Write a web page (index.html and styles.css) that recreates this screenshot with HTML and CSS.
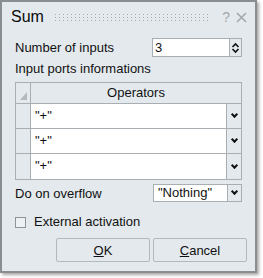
FILE: index.html
```html
<!DOCTYPE html>
<html lang="en">
<head>
  <meta charset="UTF-8" />
  <title>Sum</title>
  <link rel="stylesheet" href="styles.css">
</head>
<body>

  <div class="dialog">
    <div class="titlebar">
      <span class="title">Sum</span>
      <span class="grip"></span>
      <span class="help">?</span>
      <svg class="close" width="11" height="11" viewBox="0 0 11 11">
        <path d="M1 1 L10 10 M10 1 L1 10" stroke="#a3a8ab" stroke-width="1.6" />
      </svg>
    </div>

    <div class="content">
      <div class="field">
        <span>Number of inputs</span>
        <div class="spin">
          <span class="spin-value">3</span>
          <span class="spin-btn">
            <svg width="9" height="12" viewBox="0 0 9 12">
              <path d="M1.5 5 L4.5 2 L7.5 5 M1.5 7 L4.5 10 L7.5 7" fill="none" stroke="#111" stroke-width="1.6" />
            </svg>
          </span>
        </div>
      </div>

      <div class="section-label">Input ports informations</div>

      <div class="grid">
        <div class="corner"><span class="tri"></span></div>
        <div class="col-head">Operators</div>

        <div class="row-head"></div>
        <div class="cell"><span class="cell-text">"+"</span><span class="drop"><i class="chev"></i></span></div>

        <div class="row-head"></div>
        <div class="cell"><span class="cell-text">"+"</span><span class="drop"><i class="chev"></i></span></div>

        <div class="row-head"></div>
        <div class="cell"><span class="cell-text">"+"</span><span class="drop"><i class="chev"></i></span></div>
      </div>

      <div class="field overflow">
        <span>Do on overflow</span>
        <div class="combo">
          <span class="combo-value">"Nothing"</span>
          <span class="drop"><i class="chev"></i></span>
        </div>
      </div>

      <label class="check">
        <span class="box"></span>
        External activation
      </label>
    </div>

    <div class="buttons">
      <button><u>O</u>K</button>
      <button><u>C</u>ancel</button>
    </div>
  </div>

</body>
</html>
```

FILE: styles.css
```css
:root {
  --bg: #e3e9ed;
  --line: #a9aeb2;
  --text: #111;
}

* {
  margin: 0;
  padding: 0;
  box-sizing: border-box;
  font-family: 'Liberation Sans', Arial, sans-serif;
}

body {
  background: #fff;
  width: 263px;
  height: 278px;
  overflow: hidden;
}

.dialog {
  width: 257px;
  height: 273px;
  background: var(--bg);
  border: 2px solid #8b8e90;
  box-shadow: 2px 2px 3px rgba(0, 0, 0, 0.35);
  color: var(--text);
  font-size: 13px;
  display: flex;
  flex-direction: column;
}

.titlebar {
  height: 32px;
  display: flex;
  align-items: center;
  padding: 0 8px 2px 9px;
}

.title {
  font-size: 16px;
  color: #0b0b0b;
}

/* dotted drag handle: vertical lines masked into dots */
.grip {
  flex: 1;
  height: 7px;
  margin: 0 13px 0 11px;
  background-image: linear-gradient(180deg, transparent 1px, var(--bg) 1px),
                    linear-gradient(90deg, #a4aaae 1px, transparent 1px);
  background-size: 4px 3px, 4px 3px;
}

.help {
  color: #a3a8ab;
  font-size: 14px;
  margin-right: 6px;
}

.content {
  padding: 4px 13px 0 13px;
}

.field {
  display: flex;
  justify-content: space-between;
  align-items: center;
  height: 19px;
}

.spin {
  width: 90px;
  height: 19px;
  display: flex;
  border: 1px solid var(--line);
  background: #fff;
}

.spin-value {
  flex: 1;
  padding-left: 2px;
  line-height: 17px;
}

.spin-btn {
  width: 12px;
  border-left: 1px solid var(--line);
  background: var(--bg);
  display: flex;
  align-items: center;
  justify-content: center;
}

.section-label {
  margin-top: 4px;
  line-height: 16px;
}

.grid {
  margin-top: 5px;
  display: grid;
  grid-template-columns: 15px 1fr;
  grid-template-rows: 21px 25px 25px 25px;
  border: 1px solid var(--line);
}

.corner {
  border-right: 1px solid var(--line);
  border-bottom: 1px solid var(--line);
  position: relative;
}

.tri {
  position: absolute;
  right: 3px;
  bottom: 3px;
  width: 0;
  height: 0;
  border-left: 7px solid transparent;
  border-bottom: 8px solid #b4b9bc;
}

.col-head {
  border-bottom: 1px solid var(--line);
  text-align: center;
  line-height: 20px;
}

.row-head {
  border-right: 1px solid var(--line);
  border-bottom: 1px solid var(--line);
}

.row-head:nth-last-child(2) {
  border-bottom: none;
}

.cell {
  display: flex;
  background: #fff;
  border-bottom: 1px solid var(--line);
}

.cell:last-child {
  border-bottom: none;
}

.cell-text {
  flex: 1;
  padding-left: 4px;
  line-height: 24px;
}

.drop {
  width: 15px;
  border-left: 1px solid var(--line);
  background: var(--bg);
  display: flex;
  align-items: center;
  justify-content: center;
}

.chev {
  width: 5px;
  height: 5px;
  border-right: 2px solid #111;
  border-bottom: 2px solid #111;
  transform: rotate(45deg);
  margin-top: -3px;
}

.overflow {
  margin-top: 4px;
  height: 18px;
}

.combo {
  width: 89px;
  height: 18px;
  display: flex;
  border: 1px solid var(--line);
  background: #fff;
}

.combo-value {
  flex: 1;
  padding-left: 4px;
  line-height: 16px;
}

.combo .drop {
  width: 14px;
}

.check {
  margin-top: 12px;
  display: flex;
  align-items: center;
  gap: 8px;
  line-height: 16px;
}

.box {
  width: 11px;
  height: 11px;
  border: 1px solid #8f9396;
  background: #eef1f3;
}

.buttons {
  margin-top: auto;
  padding: 0 6px 9px 54px;
  display: flex;
  gap: 3px;
}

.buttons button {
  width: 94px;
  height: 24px;
  background: var(--bg);
  border: 1px solid #b3b8bb;
  border-radius: 2px;
  font-size: 13px;
  color: var(--text);
}
```
